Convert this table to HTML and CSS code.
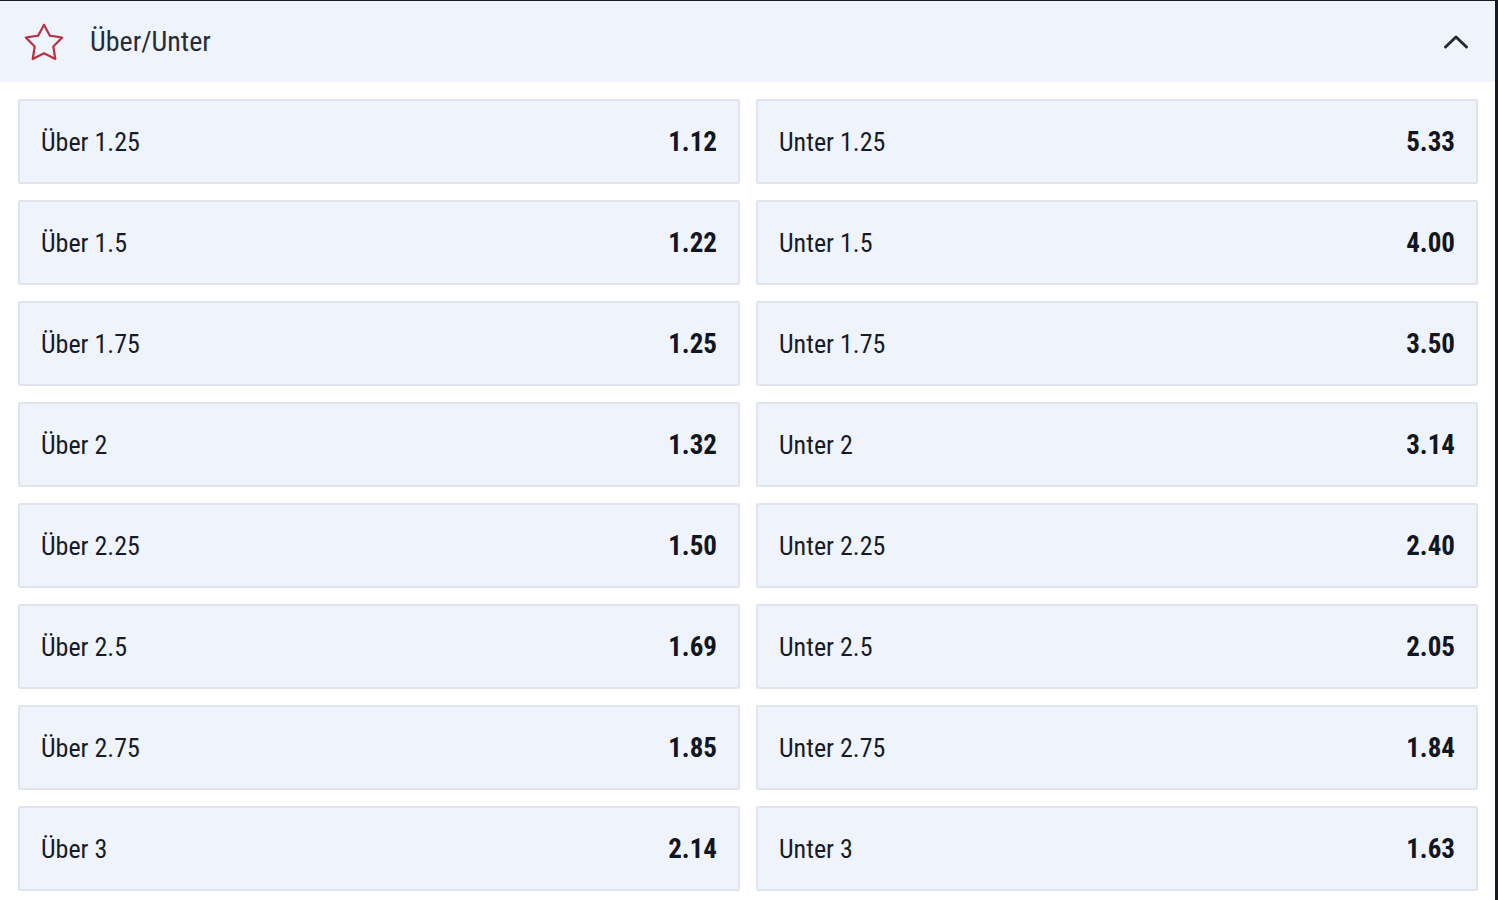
FILE: index.html
```html
<!DOCTYPE html>
<html lang="de">
<head>
<meta charset="utf-8">
<title>Über/Unter</title>
<link rel="stylesheet" href="styles.css">
</head>
<body>
<section class="market">
  <header class="market-head">
    <svg class="star" width="40" height="38" viewBox="0 0 40 38" aria-hidden="true">
      <path d="M20 1.8 L25.7 12.6 L38.2 14.5 L29.3 23.5 L31.3 36 L20 30.3 L8.7 36 L10.7 23.5 L1.8 14.5 L14.3 12.6 Z" fill="none" stroke="#b8323f" stroke-width="2.2" stroke-linejoin="round"/>
    </svg>
    <h2 class="title">Über/Unter</h2>
    <svg class="chev" width="26" height="16" viewBox="0 0 26 16" aria-hidden="true">
      <path d="M2.5 13 L13 3 L23.5 13" fill="none" stroke="#262b36" stroke-width="3" stroke-linecap="round" stroke-linejoin="round"/>
    </svg>
  </header>
  <div class="grid">
    <button class="odd"><span class="lbl">Über 1.25</span><span class="val">1.12</span></button>
    <button class="odd"><span class="lbl">Unter 1.25</span><span class="val">5.33</span></button>
    <button class="odd"><span class="lbl">Über 1.5</span><span class="val">1.22</span></button>
    <button class="odd"><span class="lbl">Unter 1.5</span><span class="val">4.00</span></button>
    <button class="odd"><span class="lbl">Über 1.75</span><span class="val">1.25</span></button>
    <button class="odd"><span class="lbl">Unter 1.75</span><span class="val">3.50</span></button>
    <button class="odd"><span class="lbl">Über 2</span><span class="val">1.32</span></button>
    <button class="odd"><span class="lbl">Unter 2</span><span class="val">3.14</span></button>
    <button class="odd"><span class="lbl">Über 2.25</span><span class="val">1.50</span></button>
    <button class="odd"><span class="lbl">Unter 2.25</span><span class="val">2.40</span></button>
    <button class="odd"><span class="lbl">Über 2.5</span><span class="val">1.69</span></button>
    <button class="odd"><span class="lbl">Unter 2.5</span><span class="val">2.05</span></button>
    <button class="odd"><span class="lbl">Über 2.75</span><span class="val">1.85</span></button>
    <button class="odd"><span class="lbl">Unter 2.75</span><span class="val">1.84</span></button>
    <button class="odd"><span class="lbl">Über 3</span><span class="val">2.14</span></button>
    <button class="odd"><span class="lbl">Unter 3</span><span class="val">1.63</span></button>
  </div>
</section>
</body>
</html>
```

FILE: styles.css
```css
* { box-sizing: border-box; }
html, body { margin: 0; padding: 0; background: #ffffff; }
body {
  font-family: "Roboto Condensed", Roboto, "Liberation Sans", sans-serif;
  font-stretch: 85%;
  width: 1498px;
  height: 900px;
  overflow: hidden;
}
.market {
  border-top: 1px solid #161a26;
  border-right: 3px solid #161a26;
  height: 900px;
  background: #ffffff;
}
.market-head {
  height: 81px;
  background: #eff3fb;
  display: flex;
  align-items: center;
  padding: 0 26px 0 24px;
}
.star { flex: none; }
.title {
  margin: 0 0 0 26px;
  font-size: 28px;
  font-weight: 400;
  color: #272c38;
  flex: 1;
}
.chev { flex: none; }
.grid {
  display: grid;
  grid-template-columns: 1fr 1fr;
  column-gap: 16px;
  row-gap: 16px;
  padding: 17px 17px 0 18px;
}
.odd {
  height: 85px;
  display: flex;
  align-items: center;
  justify-content: space-between;
  padding: 0 21px;
  background: #eff3fb;
  border: 2px solid #dfe4ef;
  border-radius: 2px;
  font-family: inherit;
  font-stretch: inherit;
  color: #171b27;
  cursor: pointer;
}
.lbl {
  font-size: 26px;
  font-weight: 400;
}
.val {
  font-size: 27px;
  font-weight: 700;
  color: #121620;
}
```
